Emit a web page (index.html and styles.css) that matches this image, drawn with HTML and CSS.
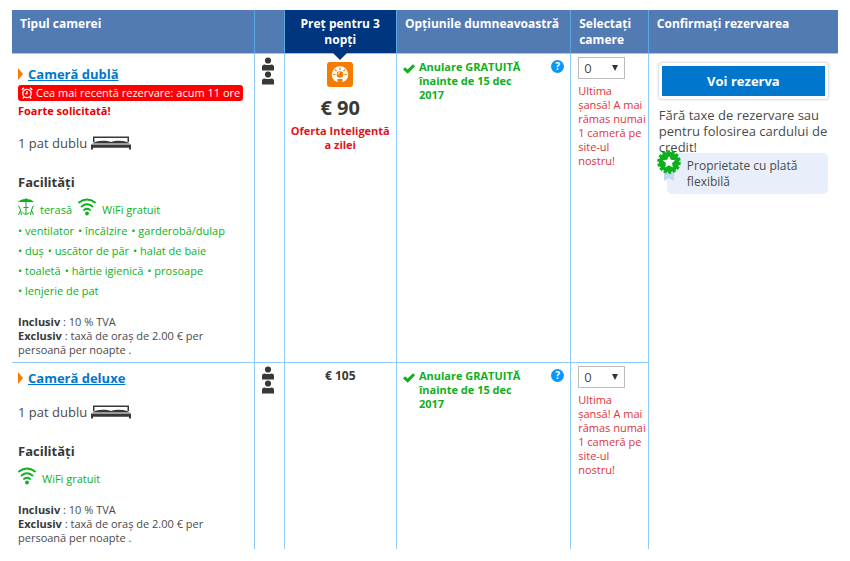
FILE: index.html
```html
<!DOCTYPE html>
<html lang="ro">
<head>
  <meta charset="UTF-8" />
  <meta name="viewport" content="width=device-width, initial-scale=1.0"/>
  <title>Camere disponibile</title>
  <link rel="stylesheet" href="styles.css">
</head>
<body>

  <!-- Shared icons -->
  <svg class="sprite" aria-hidden="true">
    <symbol id="i-guest" viewBox="0 0 12 14">
      <circle cx="6" cy="3.500" r="3.100"/>
      <path d="M0 13.500V10Q0 7.500 2.500 7.500Q6 8.500 9.500 7.500Q12 7.500 12 10V13.500z"/>
    </symbol>
    <symbol id="i-bed" viewBox="0 0 40 14">
      <path d="M2 6V0.500h36V6h-1.500V2h-33V6z"/>
      <path d="M1 7.500L4 6Q8 4.600 14 4.800Q18 5 20 6Q22 5 26 4.800Q32 4.600 36 6L39 7.500z"/>
      <path d="M0 8.500h40V13.500h-2V11.800H2V13.500H0z"/>
    </symbol>
    <symbol id="i-wifi" viewBox="0 0 18 18">
      <g fill="none" stroke="currentColor" stroke-width="1.900" stroke-linecap="round">
        <path d="M1 4.500Q9-1.500 17 4.500"/>
        <path d="M3.500 8.500Q9 4 14.500 8.500"/>
        <path d="M6 12Q9 9.700 12 12"/>
      </g>
      <circle cx="9" cy="15.500" r="1.900"/>
    </symbol>
    <symbol id="i-check" viewBox="0 0 12 10">
      <path d="M0 5.500L2 3.300L4.600 5.500L10 0.300L12 2.300L4.800 9.800z"/>
    </symbol>
  </svg>

  <table class="rooms">
    <colgroup>
      <col class="col-type">
      <col class="col-guests">
      <col class="col-price">
      <col class="col-options">
      <col class="col-select">
      <col class="col-confirm">
    </colgroup>
    <thead>
      <tr>
        <th scope="col">Tipul camerei</th>
        <th scope="col" aria-label="Persoane"></th>
        <th scope="col" class="price-head">Preţ pentru 3 nopţi</th>
        <th scope="col" class="options-head">Opțiunile dumneavoastră</th>
        <th scope="col">Selectaţi camere</th>
        <th scope="col">Confirmați rezervarea</th>
      </tr>
    </thead>
    <tbody>
      <tr class="featured">
        <td class="type">
          <div class="room-name"><span class="arrow"></span><a href="#dubla">Cameră dublă</a></div>
          <div class="last-booking">
            <svg class="clock" width="12" height="12" viewBox="0 0 12 12">
              <circle cx="6" cy="6.500" r="4.200"/>
              <path d="M6 4v2.700H4.200M.7 3L3 .8M11.300 3L9 .8M3 10L1.800 11.500M9 10l1.200 1.500"/>
            </svg>
            Cea mai recentă rezervare: acum 11 ore
          </div>
          <div class="demand">Foarte solicitată!</div>
          <div class="bed">1 pat dublu <svg width="40" height="14"><use href="#i-bed"/></svg></div>
          <h3>Facilități</h3>
          <div class="main-facilities">
            <svg width="16" height="18" viewBox="0 0 16 18">
              <path d="M0 4Q3 1 7.500 1V0h1v1Q13 1 16 4z"/>
              <path d="M7.500 4h1v12h-1zM5.500 9h5v1h-5z"/>
              <path d="M.5 7.500L2.500 12L3.500 17M2.500 12.500L.5 17M15.500 7.500L13.500 12L12.500 17M13.500 12.500L15.500 17M4.500 14.500Q8 18 11.500 14.500" fill="none" stroke="currentColor"/>
            </svg>
            <span>terasă</span>
            <svg width="18" height="18"><use href="#i-wifi"/></svg>
            <span>WiFi gratuit</span>
          </div>
          <ul class="facilities">
            <li>ventilator</li>
            <li>încălzire</li>
            <li>garderobă/dulap</li>
            <li>duş</li>
            <li>uscător de păr</li>
            <li>halat de baie</li>
            <li>toaletă</li>
            <li>hârtie igienică</li>
            <li>prosoape</li>
            <li>lenjerie de pat</li>
          </ul>
          <p class="taxes"><b>Inclusiv</b> : 10 % TVA<br><b>Exclusiv</b> : taxă de oraş de 2.00 € per persoană per noapte .</p>
        </td>
        <td class="guests">
          <svg width="12" height="14"><use href="#i-guest"/></svg>
          <svg width="12" height="14"><use href="#i-guest"/></svg>
        </td>
        <td class="price">
          <svg class="deal-icon" width="26" height="25" viewBox="0 0 26 25">
            <rect width="26" height="25" rx="3" fill="#f57c00"/>
            <circle cx="13" cy="12.500" r="8.200" fill="#fff"/>
            <path d="M13 5.500v2.500M7.800 7.300l1.800 1.800M18.200 7.300l-1.800 1.800M6 12.500h2.500M20 12.500h-2.500" stroke="#f57c00" stroke-width="1.200"/>
            <circle cx="13" cy="12.500" r="3.300" fill="#f57c00"/>
            <path d="M11 12.500a2 2 0 0 1 2-2" fill="none" stroke="#fff"/>
            <path d="M10.500 17h5v4.500h-5z" fill="#f57c00"/>
          </svg>
          <div class="amount">€ 90</div>
          <div class="deal">Oferta Inteligentă a zilei</div>
        </td>
        <td class="options">
          <div class="option">
            <svg width="12" height="10"><use href="#i-check"/></svg>
            <span>Anulare GRATUITĂ înainte de 15 dec 2017</span>
            <button type="button" class="help" aria-label="Detalii anulare">?</button>
          </div>
        </td>
        <td class="select">
          <div class="picker">
            <select aria-label="Număr de camere duble">
              <option>0</option>
              <option>1</option>
            </select>
          </div>
          <p class="scarce">Ultima<br>şansă! A mai rămas numai 1 cameră pe site-ul<br>nostru!</p>
        </td>
        <td class="confirm" rowspan="2">
          <button type="button" class="reserve">Voi rezerva</button>
          <p class="no-fees">Fără taxe de rezervare sau pentru folosirea cardului de credit!</p>
          <div class="flexible">
            <svg class="rosette" width="24" height="32" viewBox="0 0 24 32">
              <path d="M7 19h10v12l-5-3-5 3z" fill="#bcd8f3"/>
              <circle cx="12" cy="12" r="10.200" fill="#0eb01c"/>
              <circle cx="12" cy="12" r="10.500" fill="none" stroke="#0eb01c" stroke-width="2.600" stroke-dasharray="3 1.712"/>
              <path d="M12 6l1.900 3.800 4.200.5-3.100 2.900.9 4.200-3.900-2.100-3.900 2.100.9-4.200-3.100-2.900 4.200-.5z" fill="#fff"/>
            </svg>
            Proprietate cu plată flexibilă
          </div>
        </td>
      </tr>
      <tr>
        <td class="type">
          <div class="room-name"><span class="arrow"></span><a href="#deluxe">Cameră deluxe</a></div>
          <div class="bed">1 pat dublu <svg width="40" height="14"><use href="#i-bed"/></svg></div>
          <h3>Facilități</h3>
          <div class="main-facilities">
            <svg width="18" height="18"><use href="#i-wifi"/></svg>
            <span>WiFi gratuit</span>
          </div>
          <p class="taxes"><b>Inclusiv</b> : 10 % TVA<br><b>Exclusiv</b> : taxă de oraş de 2.00 € per persoană per noapte .</p>
        </td>
        <td class="guests">
          <svg width="12" height="14"><use href="#i-guest"/></svg>
          <svg width="12" height="14"><use href="#i-guest"/></svg>
        </td>
        <td class="price">
          <div class="amount-small">€ 105</div>
        </td>
        <td class="options">
          <div class="option">
            <svg width="12" height="10"><use href="#i-check"/></svg>
            <span>Anulare GRATUITĂ înainte de 15 dec 2017</span>
            <button type="button" class="help" aria-label="Detalii anulare">?</button>
          </div>
        </td>
        <td class="select">
          <div class="picker">
            <select aria-label="Număr de camere deluxe">
              <option>0</option>
              <option>1</option>
            </select>
          </div>
          <p class="scarce">Ultima<br>şansă! A mai rămas numai 1 cameră pe site-ul<br>nostru!</p>
        </td>
      </tr>
    </tbody>
  </table>

</body>
</html>
```

FILE: styles.css
```css
* {
  margin: 0;
  padding: 0;
  box-sizing: border-box;
}

body {
  font-family: "Open Sans", "Noto Sans", sans-serif;
  font-size: 11px;
  line-height: 14px;
  color: #4a4a4a;
  background: #fff;
  padding: 10px 12px;
}

svg {
  fill: currentColor;
  flex: none;
}

.sprite {
  position: absolute;
  width: 0;
  height: 0;
}

.rooms {
  width: 100%;
  table-layout: fixed;
  border-collapse: separate;
  border-spacing: 0;
}

.col-type { width: 29.4%; }
.col-guests { width: 3.6%; }
.col-price { width: 13.6%; }
.col-options { width: 21.1%; }
.col-select { width: 9.4%; }
.col-confirm { width: 22.9%; }

th {
  background: #527ab3;
  color: #fff;
  font-size: 12px;
  line-height: 16px;
  text-align: left;
  vertical-align: top;
  padding: 6px 0 5px 8px;
  border-right: 1px solid #5aa9e6;
  border-bottom: 1px solid #8fcbfb;
}

th:last-child {
  border-right: 0;
}

.price-head {
  position: relative;
  background: #003580;
  text-align: center;
  padding-right: 8px;
}

.price-head::after {
  content: "";
  position: absolute;
  top: 100%;
  left: 50%;
  margin-left: -7px;
  border: 7px solid transparent;
  border-top-color: #003580;
  border-bottom: 0;
}

.options-head {
  white-space: nowrap;
}

td {
  vertical-align: top;
  padding: 4px 6px;
  border-right: 1px solid #8fcbfb;
}

.featured td {
  border-bottom: 1px solid #8fcbfb;
}

.featured .confirm {
  border: 0;
}

/* Room type */
.type {
  padding-top: 6px;
}

.featured .type {
  padding-top: 11px;
  padding-bottom: 5px;
}

.room-name {
  display: flex;
  align-items: center;
  gap: 5px;
  font-size: 13px;
  line-height: 18px;
  font-weight: bold;
}

.room-name a {
  color: #0077cc;
}

.arrow {
  border: 5px solid transparent;
  border-top-width: 6px;
  border-bottom-width: 6px;
  border-left-color: #f57c00;
  border-right: 0;
}

.last-booking {
  display: inline-flex;
  align-items: center;
  gap: 3px;
  margin-top: 2px;
  padding: 0 3px;
  border-radius: 3px;
  background: #f00;
  color: #fff;
  line-height: 16px;
  white-space: nowrap;
}

.clock {
  fill: none;
  stroke: currentColor;
  stroke-width: 1.3;
}

.demand {
  margin-top: 2px;
  color: #e60000;
  font-weight: bold;
}

.bed {
  margin-top: 15px;
  font-size: 13px;
  line-height: 20px;
}

.bed svg {
  vertical-align: -2px;
  color: #383838;
}

h3 {
  margin-top: 20px;
  font-size: 13px;
  line-height: 18px;
  color: #383838;
}

.main-facilities {
  display: flex;
  align-items: flex-start;
  gap: 6px;
  margin-top: 7px;
  height: 22px;
  line-height: 24px;
  color: #0eb01c;
}

.facilities {
  display: flex;
  flex-wrap: wrap;
  column-gap: 4px;
  padding-top: 1px;
  list-style: none;
  line-height: 20px;
  color: #0eb01c;
}

.facilities li::before {
  content: "• ";
}

.taxes {
  margin-top: 14px;
  padding: 0 40px 0 0;
}

.taxes b {
  color: #383838;
}

/* Guests and price */
.guests {
  padding: 3px 2px 0 0;
  color: #383838;
}

.guests svg {
  display: block;
  margin: 0 auto;
}

.price {
  text-align: center;
  color: #383838;
}

.deal-icon {
  display: block;
  margin: 4px auto 9px;
}

.amount {
  font-size: 20px;
  line-height: 24px;
  font-weight: bold;
}

.amount-small {
  font-size: 12px;
  line-height: 18px;
  font-weight: bold;
}

.deal {
  margin-top: 4px;
  color: #e0161b;
  font-weight: bold;
}

/* Options */
.option {
  display: flex;
  align-items: flex-start;
  gap: 4px;
  padding-top: 2px;
  color: #0eb01c;
  font-weight: bold;
}

.option span {
  max-width: 116px;
}

.option svg {
  margin-top: 4px;
}

.help {
  flex: none;
  width: 13px;
  height: 13px;
  margin-left: auto;
  border: 0;
  border-radius: 50%;
  background: #0896ff;
  color: #fff;
  font: bold 10px/13px "Open Sans", sans-serif;
  cursor: pointer;
}

/* Room count */
.select {
  padding: 3px 0 0 7px;
}

.picker {
  position: relative;
  width: 47px;
}

.picker::after {
  content: "";
  position: absolute;
  top: 8px;
  right: 7px;
  border: 3px solid transparent;
  border-top: 6px solid #333;
  border-bottom: 0;
  pointer-events: none;
}

.picker select {
  appearance: none;
  display: block;
  width: 100%;
  height: 22px;
  padding-left: 5px;
  border: 1px solid #bbb;
  background: #fff;
  color: #4a4a4a;
  font: 13px "Open Sans", sans-serif;
}

.scarce {
  margin-top: 5px;
  color: #e0343a;
}

/* Confirm */
.confirm {
  padding: 9px 10px 0;
}

.reserve {
  display: block;
  width: 100%;
  height: 36px;
  border: 3px solid #fff;
  border-radius: 3px;
  box-shadow: 0 0 2px 1px #d8d8d8;
  background: #0077cc;
  color: #fff;
  font: bold 13px "Open Sans", sans-serif;
  cursor: pointer;
}

.no-fees {
  margin-top: 8px;
  font-size: 13px;
  line-height: 16px;
}

.flexible {
  position: relative;
  margin: -2px 0 0 8px;
  padding: 5px 20px 4px 20px;
  border-radius: 5px;
  background: #e8effa;
  font-size: 12px;
  line-height: 16px;
}

.rosette {
  position: absolute;
  top: -3px;
  left: -10px;
}
```
